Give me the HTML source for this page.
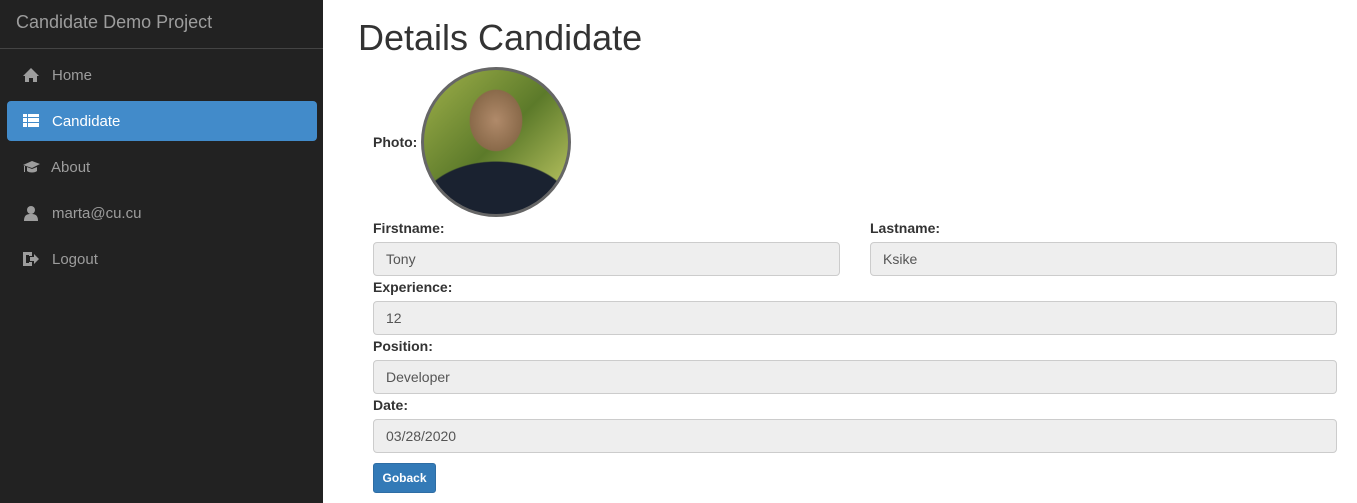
<!DOCTYPE html>
<html><head><style>
*{box-sizing:border-box;margin:0;padding:0}
body{width:1357px;height:503px;font-family:"Liberation Sans",sans-serif;background:#fff;position:relative;overflow:hidden;font-size:14px;color:#333}
.side{position:absolute;left:0;top:0;width:323px;height:503px;background:#222}
.brand{position:absolute;left:16px;top:12px;font-size:18px;color:#9d9d9d}
.hr{position:absolute;left:0;top:48px;width:323px;height:1px;background:#444}
.nav{position:absolute;left:7px;width:310px;height:40px;border-radius:4px;color:#9d9d9d;font-size:15px}
.nav span{position:absolute;left:45px;top:12px}
.nav svg{position:absolute;left:16px;top:12px}
.act{background:#428bca;color:#fff}
h1{position:absolute;left:358px;top:17px;font-size:36px;font-weight:normal;color:#333}
.lbl{position:absolute;font-weight:bold;font-size:14px;color:#333}
.inp{position:absolute;height:34px;background:#eee;border:1px solid #ccc;border-radius:4px;color:#555;padding:8px 12px;font-size:14px}
.photo{position:absolute;left:421px;top:67px;width:150px;height:150px;border-radius:50%;border:3px solid #666;overflow:hidden;background:radial-gradient(ellipse 30% 35% at 50% 35%,#b08a6a 0,#8a6a4a 60%,transparent 62%),radial-gradient(ellipse 60% 40% at 50% 100%,#1a2230 0,#1a2230 90%,transparent 92%),linear-gradient(135deg,#9fb04a,#5c7a2a 50%,#c9d06a)}
.btn{position:absolute;left:373px;top:463px;width:63px;height:30px;background:#337ab7;border:1px solid #2e6da4;border-radius:3px;color:#fff;font-size:12px;font-weight:bold;text-align:center;line-height:28px}
</style></head><body>
<div class="side">
<div class="brand">Candidate Demo Project</div>
<div class="hr"></div>
<div class="nav" style="top:55px"><svg width="16" height="16" viewBox="0 0 16 16"><path d="M8 1L0 9h2v6h4v-4h4v4h4V9h2z" fill="#9d9d9d"/></svg><span>Home</span></div>
<div class="nav act" style="top:101px"><svg width="16" height="16" viewBox="0 0 16 16" fill="#fff"><rect x="0" y="1" width="4" height="3"/><rect x="5" y="1" width="11" height="3"/><rect x="0" y="5" width="4" height="4"/><rect x="5" y="5" width="11" height="4"/><rect x="0" y="10" width="4" height="4"/><rect x="5" y="10" width="11" height="4"/></svg><span>Candidate</span></div>
<div class="nav" style="top:147px"><svg width="17" height="16" viewBox="0 0 17 16" fill="#9d9d9d"><path d="M0 6l9-4 8 3-8 4zM4 8v4c2 2 8 2 10 0V8l-5 2zM1 7v6h1V7z"/></svg><span style="left:44px">About</span></div>
<div class="nav" style="top:193px"><svg width="16" height="16" viewBox="0 0 16 16" fill="#9d9d9d"><circle cx="8" cy="5" r="4"/><path d="M1 16c0-6 3-7 7-7s7 1 7 7z"/></svg><span>marta@cu.cu</span></div>
<div class="nav" style="top:239px"><svg width="16" height="16" viewBox="0 0 16 16" fill="#9d9d9d"><path d="M0 1h9v4H6V4H3v8h3v-1h3v4H0z"/><path d="M7 6h4V3l5 5-5 5v-3H7z"/></svg><span>Logout</span></div>
</div>
<h1>Details Candidate</h1>
<div class="lbl" style="left:373px;top:134px">Photo:</div>
<div class="photo"></div>
<div class="lbl" style="left:373px;top:220px">Firstname:</div>
<div class="lbl" style="left:870px;top:220px">Lastname:</div>
<div class="inp" style="left:373px;top:242px;width:467px">Tony</div>
<div class="inp" style="left:870px;top:242px;width:467px">Ksike</div>
<div class="lbl" style="left:373px;top:279px">Experience:</div>
<div class="inp" style="left:373px;top:301px;width:964px">12</div>
<div class="lbl" style="left:373px;top:338px">Position:</div>
<div class="inp" style="left:373px;top:360px;width:964px">Developer</div>
<div class="lbl" style="left:373px;top:397px">Date:</div>
<div class="inp" style="left:373px;top:419px;width:964px">03/28/2020</div>
<div class="btn">Goback</div>
</body></html>
